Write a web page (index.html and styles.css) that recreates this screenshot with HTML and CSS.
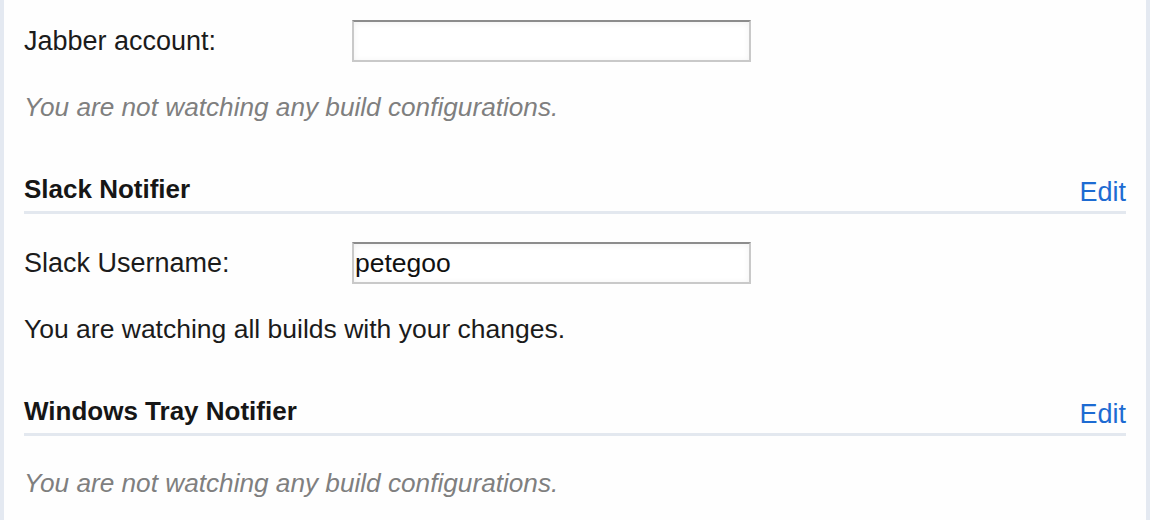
FILE: index.html
```html
<!DOCTYPE html>
<html>
<head>
<meta charset="utf-8">
<link rel="stylesheet" href="styles.css">
</head>
<body>
<div class="panel">
  <div class="form-row first">
    <label class="label">Jabber account:</label>
    <input class="field" type="text" value="">
  </div>
  <p class="note muted">You are not watching any build configurations.</p>

  <div class="section-head">
    <h3 class="title">Slack Notifier</h3>
    <a class="edit" href="#">Edit</a>
  </div>
  <div class="form-row">
    <label class="label">Slack Username:</label>
    <input class="field" type="text" value="petegoo">
  </div>
  <p class="note">You are watching all builds with your changes.</p>

  <div class="section-head">
    <h3 class="title">Windows Tray Notifier</h3>
    <a class="edit" href="#">Edit</a>
  </div>
  <p class="note muted last">You are not watching any build configurations.</p>
</div>
</body>
</html>
```

FILE: styles.css
```css
html, body {
  margin: 0;
  padding: 0;
  background: #ffffff;
}
body {
  font-family: "Liberation Sans", Arial, Helvetica, sans-serif;
  font-size: 26.5px;
  color: #1b1b1b;
}
.panel {
  width: 1102px;
  height: 520px;
  padding: 0 20px;
  border-left: 4px solid #e4e9f1;
  border-right: 4px solid #e4e9f1;
  background: #fefefe;
  overflow: hidden;
}
.form-row {
  display: flex;
  align-items: center;
  height: 42px;
  margin-top: 28px;
}
.form-row.first {
  margin-top: 20px;
}
.label {
  width: 328px;
  flex: none;
  font-size: 27px;
  line-height: 30px;
}
.field {
  box-sizing: border-box;
  width: 399px;
  height: 42px;
  margin: 0;
  padding: 0 1px;
  border: 2px solid #c9c9c9;
  border-top-color: #8c8c8c;
  border-radius: 0;
  background: #fff;
  box-shadow: inset 0 1px 6px rgba(0,0,0,0.06);
  font-family: "Liberation Sans", Arial, Helvetica, sans-serif;
  font-size: 26.5px;
  color: #111;
  outline: none;
}
.note {
  margin: 30px 0 0 0;
  line-height: 30px;
}
.note.muted {
  margin-top: 30px;
  font-size: 26.2px;
  color: #7f7f7f;
  font-style: italic;
}
.note.muted.last {
  margin-top: 32px;
}
.section-head {
  display: flex;
  justify-content: space-between;
  align-items: flex-end;
  margin-top: 52px;
  padding-bottom: 7px;
  border-bottom: 3px solid #e3e8ef;
}
.title {
  margin: 0;
  font-size: 26px;
  font-weight: bold;
  line-height: 30px;
  color: #161616;
}
.edit {
  color: #1d6bd2;
  text-decoration: none;
  font-size: 27px;
  line-height: 30px;
  margin-bottom: -3px;
}
```
